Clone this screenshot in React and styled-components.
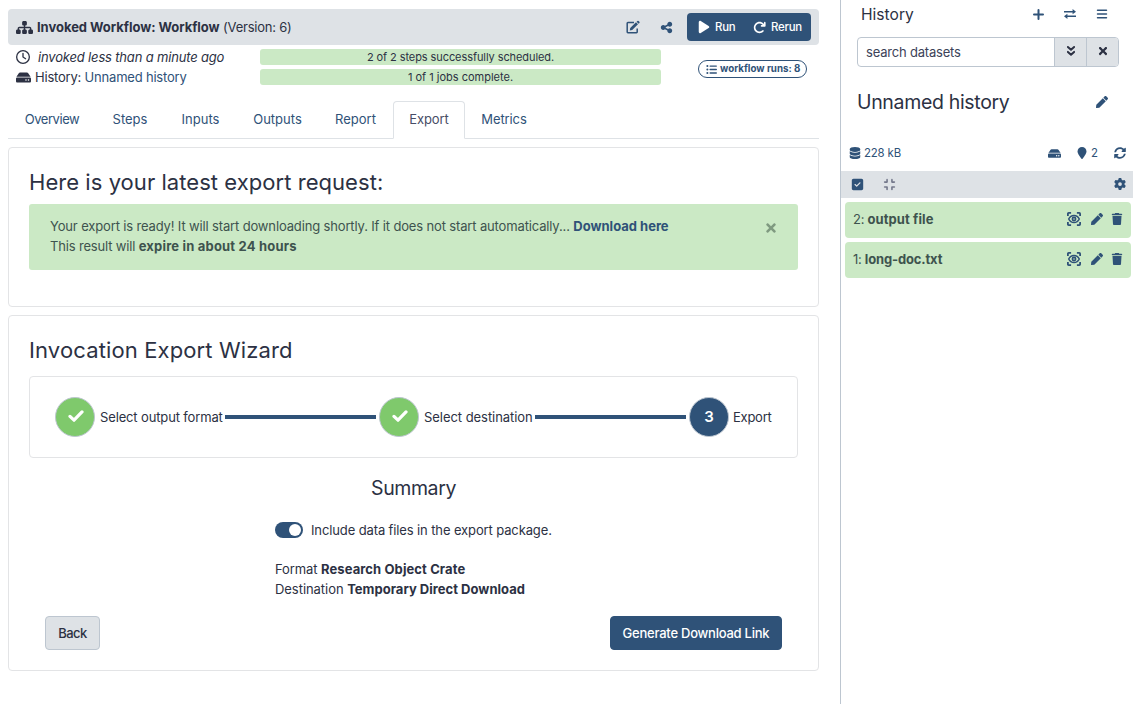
import React from "react";
import styled, { createGlobalStyle } from "styled-components";
import {
  FaSitemap, FaShareNodes, FaPlay, FaListUl, FaRegClock, FaBars,
  FaDatabase, FaLocationPin, FaSquareCheck, FaCompress, FaGear, FaTrash, FaArrowRotateRight,
} from "react-icons/fa6";
import { FaTimes, FaHdd, FaPen, FaSyncAlt } from "react-icons/fa";

const c = {
  text: "#2c3143",
  blue: "#2f5278",
  grey: "#dee2e6",
  border: "#bdc6d0",
  green: "#cbe9c5",
  card: "#e3e4e6",
};

const Global = createGlobalStyle`
  * { box-sizing: border-box; }
  body { margin: 0; background: #fff; color: ${c.text}; font: 13px/20px Inter, "Noto Sans", sans-serif; overflow: hidden; }
  h1, h2, h3, p { margin: 0; font-weight: 400; }
  button { font: inherit; color: inherit; border: 0; background: none; padding: 0; margin: 0; }
  svg { display: block; flex: none; }
`;

const T = styled.span`
  letter-spacing: ${(p) => p.$ls || 0}px;
  white-space: pre;
`;
const Page = styled.div`display: flex; height: 704px; width: 1133px;`;
const Main = styled.main`width: 840px; padding: 9px 21px 0 8px;`;
const Side = styled.aside`width: 293px; border-left: 1px solid ${c.border};`;

const TitleBar = styled.header`
  height: 36px; border-radius: 4px; background: ${c.grey};
  display: flex; align-items: center; padding: 0 8px;
`;
const Title = styled.h1`
  font-size: 13px; line-height: 20px; flex: 1; margin-left: 4px;
  b { font-weight: 700; }
`;
const IconButton = styled.button`
  color: ${c.blue}; width: 14px; height: 14px; margin-right: ${(p) => p.$mr}px;
  display: flex; align-items: center; justify-content: center;
`;
const RunGroup = styled.div`
  display: flex; align-items: center; width: 124px; height: 28px; padding-left: 10px;
  border-radius: 4px; background: ${c.blue}; color: #fff; font-size: 11.4px; font-weight: 500;
`;
const RunButton = styled.button`display: flex; align-items: center; gap: ${(p) => p.$gap}px; width: ${(p) => p.$w}px;`;

const Status = styled.section`display: flex; height: 44px; padding: 2px 0 0 8px;`;
const Facts = styled.div`width: 244px;`;
const Fact = styled.div`display: flex; align-items: center; height: 20px; gap: ${(p) => p.$gap}px;`;
const Link = styled.a`color: ${c.blue}; font-weight: ${(p) => (p.$bold ? 700 : 400)};`;
const Bars = styled.div`width: 401px; padding-top: 2px; display: flex; flex-direction: column; gap: 4px;`;
const Bar = styled.div`
  height: 16px; line-height: 17px; border-radius: 3px; background: ${c.green}; font-size: 11px; text-align: center;
`;
const Badge = styled.div`
  display: flex; align-items: center; width: 109px; height: 18px; margin: 13px 0 0 37px; padding-left: 7px; gap: 3px;
  border: 1px solid ${c.blue}; border-radius: 9px; color: ${c.blue}; font-size: 9.75px; font-weight: 700;
`;

const Tabs = styled.nav`display: flex; height: 38px; margin-top: 12px; border-bottom: 1px solid ${c.grey};`;
const Tab = styled.a`
  width: ${(p) => p.$w}px; height: 38px; text-align: center; line-height: 35px; border: 1px solid transparent;
  color: ${(p) => (p.$active ? "#484d66" : c.blue)};
  ${(p) => p.$active && `border-color: ${c.grey} ${c.grey} #fff; border-radius: 4px 4px 0 0; background: #fff;`}
`;

const Card = styled.section`
  height: ${(p) => p.$h}px; margin-top: 8px; border: 1px solid ${c.card}; border-radius: 4px; padding: 20px;
`;
const Heading = styled.h2`font-size: ${(p) => p.$size || 22}px; line-height: 28px;`;
const Alert = styled.div`
  display: flex; height: 66px; margin-top: 8px; padding: 12px 20px 12px 21px; border-radius: 3px; background: ${c.green}; color: #3e534e;
`;
const AlertText = styled.div`flex: 1;`;
const Dismiss = styled.button`height: 23px; color: #7f9a80;`;

const Steps = styled.div`
  display: flex; align-items: center; height: 82px; margin-top: 12px; padding: 0 24px 0 25px;
  border: 1px solid ${c.card}; border-radius: 4px;
`;
const Step = styled.div`display: flex; align-items: center; gap: ${(p) => p.$gap || 5}px; flex: none; width: ${(p) => p.$w}px;`;
const Circle = styled.div`
  width: 40px; height: 40px; flex: none; border-radius: 50%; border: 1px solid ${c.border};
  background: ${(p) => (p.$done ? "#7fc96c" : c.blue)}; color: #fff;
  display: flex; align-items: center; justify-content: center; font-size: 15px; font-weight: 600;
`;
const Line = styled.div`flex: none; width: 151px; height: 4px; background: ${c.blue}; margin-right: 3px;`;

const Summary = styled.div`width: 277px; margin: 16px auto 0; display: flex; flex-direction: column;`;
const SummaryTitle = styled(Heading)`text-align: center;`;
const Toggle = styled.div`display: flex; align-items: center; gap: 8px; margin: 18px 0 19px; height: 20px;`;
const Switch = styled.div`
  width: 28px; height: 16px; flex: none; padding: 2px; border-radius: 8px; background: ${c.blue};
  display: flex; justify-content: flex-end;
  &::after { content: ""; width: 12px; height: 12px; border-radius: 50%; background: #fff; }
`;
const Actions = styled.div`display: flex; justify-content: space-between; margin-top: 17px; padding: 0 16px;`;
const Button = styled.button`
  height: 34px; width: ${(p) => p.$w}px; padding-bottom: 1px; border-radius: 4px; font-weight: 500; text-align: center;
  border: 1px solid ${(p) => (p.$primary ? c.blue : c.border)};
  background: ${(p) => (p.$primary ? c.blue : c.grey)}; color: ${(p) => (p.$primary ? "#fff" : c.text)};
`;

const SideHead = styled.header`
  display: flex; align-items: center; height: 28px; padding: 0 25px 0 20px; gap: 20px; color: ${c.blue};
`;
const SideTitle = styled.h2`flex: 1; font-size: 15.6px; line-height: 20px; padding-top: 1px; color: ${c.text};`;
const Search = styled.div`
  display: flex; width: 262px; height: 30px; margin: 9px 0 0 16px; border: 1px solid ${c.border}; border-radius: 4px; overflow: hidden;
`;
const SearchField = styled.div`flex: 1; padding-left: 8px; line-height: 29px; color: #3c4258;`;
const SearchButton = styled.button`
  width: 32px; border-left: 1px solid ${c.border}; background: ${c.grey};
  display: flex; align-items: center; justify-content: center; padding-bottom: 2px;
`;
const NameRow = styled.div`
  display: flex; align-items: center; justify-content: space-between; height: 28px; margin-top: 21px; padding: 0 25px 0 16px; color: ${c.blue};
`;
const HistoryName = styled.h3`font-size: 19.5px; line-height: 28px; color: ${c.text};`;
const Stats = styled.div`
  display: flex; align-items: center; height: 20px; margin-top: 27px; padding: 0 7px 0 8px; color: ${c.blue}; font-size: 11.4px;
`;
const Stat = styled.div`display: flex; align-items: center; gap: 3px; margin-left: ${(p) => p.$ml || 0}px;`;
const Spacer = styled.div`flex: 1;`;
const Tools = styled.div`
  display: flex; align-items: center; height: 27px; margin-top: 8px; padding: 0 7px 1px 10px; background: ${c.grey}; color: ${c.blue};
`;
const Items = styled.div`display: flex; flex-direction: column; gap: 4px; padding: 4px 2px 0 4px;`;
const Item = styled.div`
  display: flex; align-items: center; height: 36px; padding: 0 8px 2px; border-radius: 4px; background: ${c.green}; color: #3e534e;
  b { font-weight: 700; }
`;
const ItemName = styled.div`flex: 1;`;
const ItemActions = styled.div`
  display: flex; align-items: center; gap: 8px; color: ${c.blue};
  svg:first-child { margin-right: 2px; }
`;
const Muted = styled.span`color: #75798c; margin-left: 19px;`;

const EditIcon = () => (
  <svg width="14" height="14" viewBox="0 0 14 14" fill="none" stroke="currentColor">
    <path d="M8 2.6H1.9Q1.2 2.6 1.2 3.3V12.1Q1.2 12.8 1.9 12.8H10.5Q11.2 12.8 11.2 12.1V8.6" strokeWidth="1.5" />
    <path fill="currentColor" stroke="none" d="M4.2 8.1 10 2.3 12 4.3 6.2 10.1 3.8 10.4zM10.6 1.7 11.4.9Q12 .4 12.6.9L13.4 1.7Q13.9 2.3 13.4 2.9L12.6 3.7z" />
  </svg>
);
const ViewIcon = () => (
  <svg width="14" height="14" viewBox="0 0 14 14" fill="none" stroke="currentColor" strokeWidth="1.8">
    <path d="M.9 4.1V1.7Q.9.9 1.7.9H4.1M9.9.9H12.3Q13.1.9 13.1 1.7V4.1M13.1 9.9V12.3Q13.1 13.1 12.3 13.1H9.9M4.1 13.1H1.7Q.9 13.1.9 12.3V9.9" />
    <path d="M1.7 7C4 2.3 10 2.3 12.3 7C10 11.7 4 11.7 1.7 7Z" strokeWidth="1.5" />
    <circle cx="7" cy="7" r="1.6" strokeWidth="1.7" />
  </svg>
);
const PlusIcon = () => (
  <svg width="11" height="11" viewBox="0 0 11 11" stroke="currentColor" strokeWidth="2" strokeLinecap="round">
    <path d="M5.5 1V10M1 5.5H10" />
  </svg>
);
const SwapIcon = () => (
  <svg width="12" height="10" viewBox="0 0 12 10" fill="currentColor">
    <path d="M0 1.9H8.6V.1L12 2.7 8.6 5.3V3.5H0zM12 8.1H3.4V9.9L0 7.3 3.4 4.7V6.5H12z" />
  </svg>
);
const CheckIcon = () => (
  <svg width="18" height="14" viewBox="0 0 18 14" fill="none" stroke="#fff" strokeWidth="3.2" strokeLinecap="round" strokeLinejoin="round">
    <path d="M4 6.4 8 10.2 16 1.9" />
  </svg>
);
const ChevronsIcon = () => (
  <svg width="10" height="12" viewBox="0 0 10 12" fill="none" stroke="currentColor" strokeWidth="2" strokeLinecap="round" strokeLinejoin="round">
    <path d="M1.9 2 5 4.8 8.1 2M1.9 6.9 5 9.7 8.1 6.9" />
  </svg>
);

const tabs = [["Overview", 88, -0.45], ["Steps", 68], ["Inputs", 73], ["Outputs", 81], ["Report", 75], ["Export", 72, -0.1], ["Metrics", 78, -0.1]];
const datasets = [["2", "output file", 0.1], ["1", "long-doc.txt", -0.15]];

export default function App() {
  return (
    <Page>
      <Global />
      <Main>
        <TitleBar>
          <FaSitemap size={17} />
          <Title><b><T $ls={-0.035}>Invoked Workflow: Workflow</T></b><T $ls={-0.22}> (Version: 6)</T></Title>
          <IconButton $mr={19}><EditIcon /></IconButton>
          <IconButton $mr={14}><FaShareNodes size={13} /></IconButton>
          <RunGroup>
            <RunButton $w={56} $gap={4}><FaPlay size={14} /><T $ls={-0.2}>Run</T></RunButton>
            <RunButton $w={56} $gap={5}><FaArrowRotateRight size={13} /><T $ls={-0.2}>Rerun</T></RunButton>
          </RunGroup>
        </TitleBar>
        <Status>
          <Facts>
            <Fact $gap={8}><FaRegClock size={14} /><T $ls={-0.17}><i>invoked less than a minute ago</i></T></Fact>
            <Fact $gap={4}><FaHdd size={15} /><T $ls={-0.2}>History: <Link>Unnamed history</Link></T></Fact>
          </Facts>
          <Bars>
            <Bar><T $ls={-0.08}>2 of 2 steps successfully scheduled.</T></Bar>
            <Bar><T>1 of 1 jobs complete.</T></Bar>
          </Bars>
          <Badge><FaListUl size={11} /><T>workflow runs: 8</T></Badge>
        </Status>
        <Tabs>
          {tabs.map(([name, w, ls]) => <Tab key={name} $w={w} $active={name === "Export"}><T $ls={ls}>{name}</T></Tab>)}
        </Tabs>
        <Card $h={160}>
          <Heading><T $ls={0.05}>Here is your latest export request:</T></Heading>
          <Alert>
            <AlertText>
              <p><T $ls={-0.146}>Your export is ready! It will start downloading shortly. If it does not start automatically... </T><Link $bold><T>Download here</T></Link></p>
              <p><T $ls={-0.17}>This result will </T><b><T $ls={0.19}>expire in about 24 hours</T></b></p>
            </AlertText>
            <Dismiss><FaTimes size={14} /></Dismiss>
          </Alert>
        </Card>
        <Card $h={356}>
          <Heading><T $ls={0.13}>Invocation Export Wizard</T></Heading>
          <Steps>
            <Step $w={170}><Circle $done><CheckIcon /></Circle><T $ls={-0.14}>Select output format</T></Step>
            <Line />
            <Step $w={156}><Circle $done><CheckIcon /></Circle><T $ls={-0.05}>Select destination</T></Step>
            <Line />
            <Step $w={84} $gap={4}><Circle>3</Circle><T $ls={-0.25}>Export</T></Step>
          </Steps>
          <Summary>
            <SummaryTitle $size={19.5}><T $ls={-0.4}>Summary</T></SummaryTitle>
            <Toggle><Switch /><T $ls={-0.12}>Include data files in the export package.</T></Toggle>
            <p><T $ls={-0.1}>Format </T><b><T $ls={0.1}>Research Object Crate</T></b></p>
            <p><T $ls={-0.05}>Destination </T><b><T $ls={0.02}>Temporary Direct Download</T></b></p>
          </Summary>
          <Actions>
            <Button $w={55}><T $ls={-0.5}>Back</T></Button>
            <Button $w={172} $primary><T $ls={-0.24}>Generate Download Link</T></Button>
          </Actions>
        </Card>
      </Main>
      <Side>
        <SideHead>
          <SideTitle><T>History</T></SideTitle>
          <PlusIcon /><SwapIcon /><FaBars size={12} />
        </SideHead>
        <Search>
          <SearchField><T $ls={-0.2}>search datasets</T></SearchField>
          <SearchButton><ChevronsIcon /></SearchButton>
          <SearchButton><FaTimes size={12} /></SearchButton>
        </Search>
        <NameRow><HistoryName><T $ls={-0.33}>Unnamed history</T></HistoryName><FaPen size={12} /></NameRow>
        <Stats>
          <Stat><FaDatabase size={12} /><T $ls={-0.15}>228 kB</T></Stat>
          <Spacer />
          <FaHdd size={13} />
          <Stat $ml={15}><FaLocationPin size={12} /><T>2</T></Stat>
          <Stat $ml={16}><FaSyncAlt size={12} /></Stat>
        </Stats>
        <Tools><FaSquareCheck size={13} /><Muted><FaCompress size={13} /></Muted><Spacer /><FaGear size={12} /></Tools>
        <Items>
          {datasets.map(([n, name, ls]) => (
            <Item key={n}>
              <ItemName><T $ls={-0.3}>{n}: </T><b><T $ls={ls}>{name}</T></b></ItemName>
              <ItemActions><ViewIcon /><FaPen size={12} /><FaTrash size={12} /></ItemActions>
            </Item>
          ))}
        </Items>
      </Side>
    </Page>
  );
}
